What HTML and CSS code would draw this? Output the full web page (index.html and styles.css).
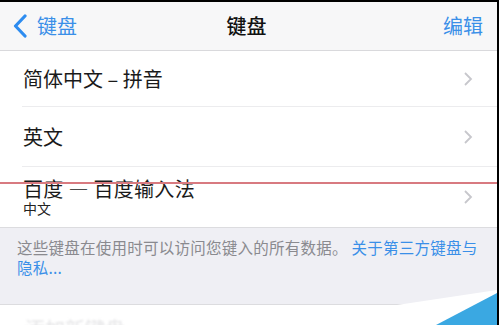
FILE: index.html
```html
<!DOCTYPE html>
<html lang="zh">
<head>
<meta charset="utf-8">
<title>键盘</title>
<link rel="stylesheet" href="styles.css">
</head>
<body>
<div class="screen">
  <header class="nav">
    <a class="back">
      <svg class="back-icon" width="14" height="24" viewBox="0 0 14 24"><path d="M12 2 L2.5 12 L12 22" fill="none" stroke="#2d8cf0" stroke-width="3.2" stroke-linecap="round" stroke-linejoin="round"/></svg>
      <span>键盘</span>
    </a>
    <h1 class="title">键盘</h1>
    <a class="edit">编辑</a>
  </header>

  <ul class="list">
    <li class="row row-first">
      <span class="label">简体中文 – 拼音</span>
      <svg class="chev" width="10" height="16" viewBox="0 0 10 16"><path d="M2 2 L8 8 L2 14" fill="none" stroke="#c7c7cc" stroke-width="1.8"/></svg>
    </li>
    <li class="row">
      <span class="label">英文</span>
      <svg class="chev" width="10" height="16" viewBox="0 0 10 16"><path d="M2 2 L8 8 L2 14" fill="none" stroke="#c7c7cc" stroke-width="1.8"/></svg>
    </li>
    <li class="row row-last">
      <div class="stack">
        <span class="label label-tight">百度 — 百度输入法</span>
        <span class="sub">中文</span>
      </div>
      <svg class="chev" width="10" height="16" viewBox="0 0 10 16"><path d="M2 2 L8 8 L2 14" fill="none" stroke="#c7c7cc" stroke-width="1.8"/></svg>
    </li>
  </ul>

  <p class="note">这些键盘在使用时可以访问您键入的所有数据。 <a class="link">关于第三方键盘与隐私...</a></p>

  <div class="list2">
    <div class="faded">添加新键盘...</div>
  </div>

  <div class="redline"></div>
  <svg class="corner" width="100" height="40" viewBox="0 0 100 40">
    <polygon points="0,20 100,5 100,20" fill="#ffffff"/>
    <polygon points="39,40 100,8 100,40" fill="#3aa8e2"/>
  </svg>
</div>
</body>
</html>
```

FILE: styles.css
```css
html, body {
  margin: 0;
  padding: 0;
  width: 499px;
  height: 325px;
  overflow: hidden;
  background: #ffffff;
}

.screen {
  position: relative;
  width: 497px;
  height: 323px;
  border-top: 2px solid #000;
  border-right: 2px solid #000;
  overflow: hidden;
  font-family: "Noto Sans CJK SC", "Noto Sans", sans-serif;
  background: #ffffff;
}

.nav {
  display: grid;
  grid-template-columns: 1fr auto 1fr;
  align-items: center;
  height: 48px;
  background: #f7f7f8;
  border-bottom: 1px solid #d9d9dc;
}

.back {
  display: flex;
  align-items: center;
  gap: 10px;
  padding-left: 13px;
  color: #3a8fe8;
  font-size: 20px;
  line-height: 24px;
}

.back-icon {
  display: block;
}

.title {
  margin: 0;
  font-size: 20px;
  font-weight: 500;
  line-height: 24px;
  color: #111;
  padding-right: 4px;
}

.edit {
  justify-self: end;
  padding-right: 14px;
  color: #3a8fe8;
  font-size: 20px;
  line-height: 24px;
}

.list {
  list-style: none;
  margin: 0;
  padding: 0;
  border-bottom: 1px solid #dcdcdf;
}

.row {
  position: relative;
  display: flex;
  align-items: center;
  justify-content: space-between;
  height: 59px;
  margin-left: 22px;
  padding: 0 24px 0 1px;
  border-bottom: 1px solid #ececee;
}

.row-first {
  height: 55px;
}

.row-last {
  height: 60px;
  border-bottom: none;
}

.label {
  font-size: 20px;
  line-height: 24px;
  color: #1a1a1a;
}

.label-tight {
  line-height: 20px;
  letter-spacing: 0.3px;
}

.stack {
  display: flex;
  flex-direction: column;
  gap: 2px;
  padding-top: 1px;
}

.sub {
  font-size: 14px;
  line-height: 15px;
  color: #222;
}

.chev {
  display: block;
}

.note {
  margin: 0;
  padding: 9px 12px 27px 17px;
  background: #efeff4;
  border-bottom: 1px solid #dcdcdf;
  font-size: 15.5px;
  line-height: 20px;
  letter-spacing: 0.25px;
  color: #8a8a8f;
}

.link {
  color: #3a8fe8;
}

.list2 {
  background: #fff;
}

.faded {
  padding: 12px 0 0 25px;
  font-size: 20px;
  line-height: 24px;
  color: #e4e4e6;
  filter: blur(1px);
}

.redline {
  position: absolute;
  left: 0;
  right: 0;
  top: 180px;
  height: 2px;
  background: #d87a80;
}

.corner {
  position: absolute;
  right: 0;
  bottom: 0;
}
```
